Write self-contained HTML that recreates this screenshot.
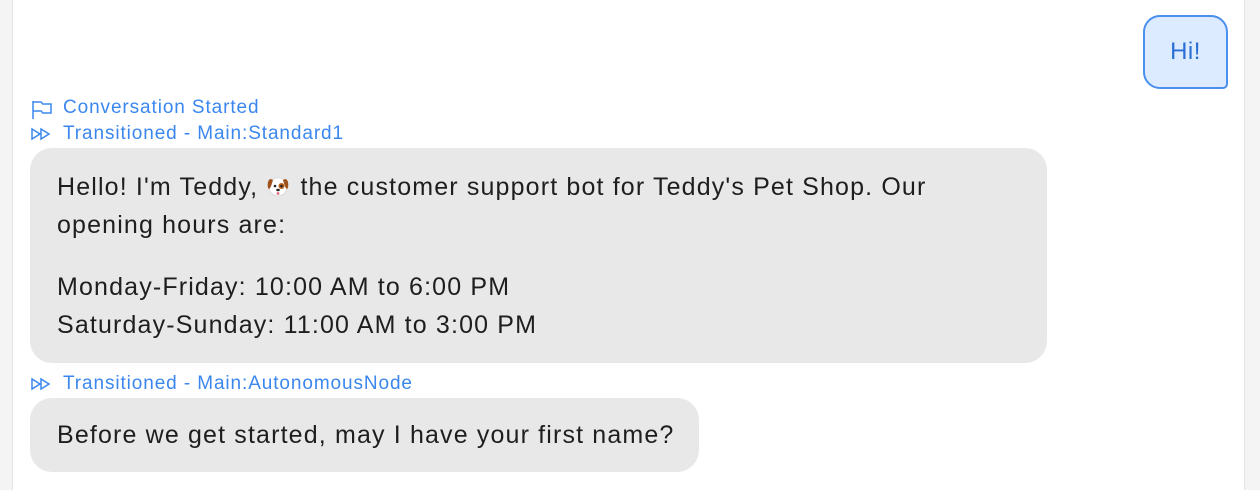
<!DOCTYPE html>
<html><head><meta charset="utf-8"><style>
html,body{margin:0;padding:0;width:1260px;height:490px;overflow:hidden;background:#fff;font-family:"Liberation Sans",sans-serif;}
.l{position:absolute;left:0;top:0;width:12px;height:490px;background:#f4f4f4;border-right:1px solid #e3e3e3}
.r{position:absolute;left:1244px;top:0;width:16px;height:490px;background:#f4f4f4;border-left:1px solid #e3e3e3}
.hi{position:absolute;left:1143px;top:15px;width:81px;height:70px;background:#dcebff;border:2px solid #4a90ec;border-radius:17px 17px 5px 17px;color:#2a6fd4;font-size:24px;line-height:70px;text-align:center;letter-spacing:0.5px}
.lab{position:absolute;left:31px;color:#3b87ee;font-size:19px;line-height:20px;white-space:nowrap;letter-spacing:0.9px}
.lab svg{position:absolute;left:0;top:2px}
.lab span{position:absolute;left:32px;top:0}
.b{position:absolute;left:30px;background:#e8e8e8;border-radius:22px;color:#1e1e1e;font-size:25px;line-height:38px;box-sizing:border-box;padding-left:27px;white-space:nowrap;letter-spacing:1.15px}
.dog{display:inline-block;width:26px;height:24px;vertical-align:-3px;position:relative}
</style></head><body>
<div class="l"></div><div class="r"></div>
<div class="hi">Hi!</div>
<div class="lab" style="top:98px"><svg width="22" height="20" viewBox="0 0 22 20" fill="none" stroke="#3b87ee" stroke-width="1.5"><path d="M2 1V19M2 2H10C11 2 11 4 12 4H20V13H12C11 13 11 11 10 11H2"/></svg><span>Conversation Started</span></div>
<div class="lab" style="top:124px"><svg width="22" height="16" viewBox="0 0 22 16" fill="none" stroke="#3b87ee" stroke-width="1.5"><path d="M1 3V13L9 8Z M10 3V13L18 8Z"/></svg><span>Transitioned - Main:Standard1</span></div>
<div class="b" style="top:148px;width:1017px;height:215px;padding-top:20px">Hello! I'm Teddy, <span class="dog"><svg width="24" height="24" viewBox="0 0 24 24"><circle cx="12" cy="13" r="9" fill="#fff" stroke="#ccc" stroke-width=".6"/><path d="M5 5C1 5 1 14 3 15C5 14 6 9 7 6Z" fill="#a0521d"/><path d="M19 5C23 5 23 14 21 15C19 14 18 9 17 6Z" fill="#a0521d"/><circle cx="15.5" cy="12" r="3" fill="#b8621f"/><circle cx="9" cy="12" r="1.3" fill="#222"/><circle cx="15.5" cy="12" r="1.3" fill="#222"/><ellipse cx="12" cy="16" rx="1.8" ry="1.2" fill="#222"/><ellipse cx="12" cy="19.5" rx="1.4" ry="1.5" fill="#e8708a"/></svg></span> the customer support bot for Teddy's Pet Shop. Our<br>opening hours are:<div style="height:24px"></div>Monday-Friday: 10:00 AM to 6:00 PM<br>Saturday-Sunday: 11:00 AM to 3:00 PM</div>
<div class="lab" style="top:374px"><svg width="22" height="16" viewBox="0 0 22 16" fill="none" stroke="#3b87ee" stroke-width="1.5"><path d="M1 3V13L9 8Z M10 3V13L18 8Z"/></svg><span>Transitioned - Main:AutonomousNode</span></div>
<div class="b" style="top:398px;width:669px;height:74px;line-height:74px">Before we get started, may I have your first name?</div>
</body></html>
